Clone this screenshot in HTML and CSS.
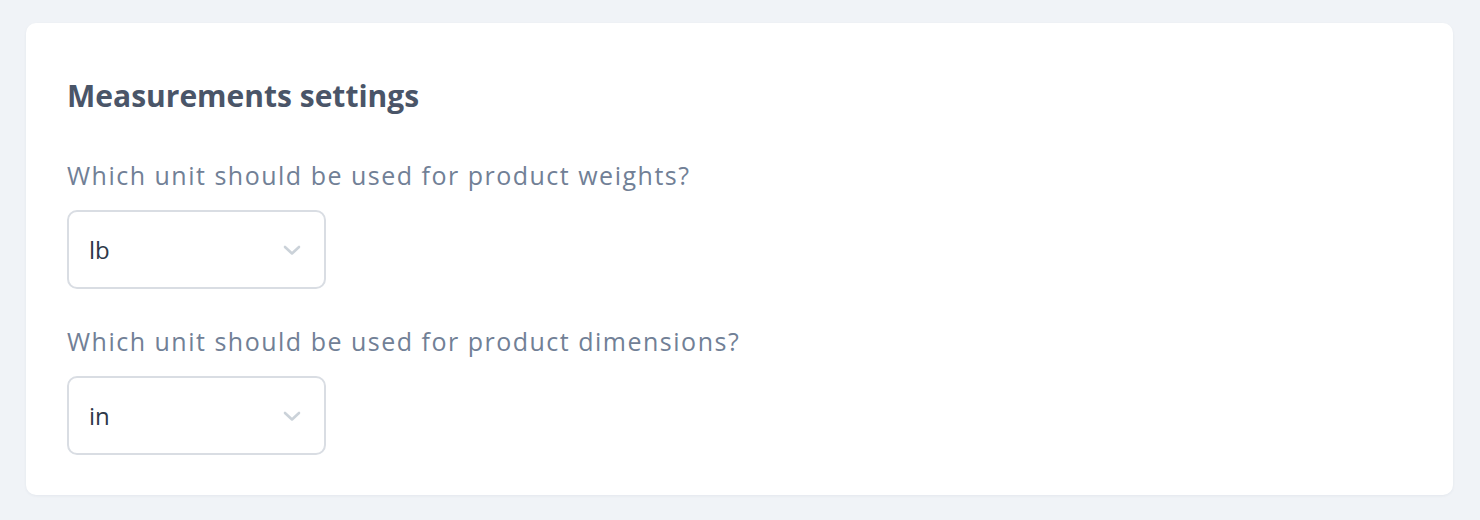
FILE: index.html
```html
<!DOCTYPE html>
<html lang="en">
<head>
  <meta charset="UTF-8" />
  <meta name="viewport" content="width=device-width, initial-scale=1.0" />
  <title>Measurements settings</title>
  <link rel="stylesheet" href="styles.css">
</head>
<body>

  <!-- settings card -->
  <section class="card">
    <h2 class="card-title">Measurements settings</h2>

    <div class="field">
      <label class="field-label" for="weightUnit">Which unit should be used for product weights?</label>
      <div class="select">
        <span class="select-value" id="weightUnit">lb</span>
        <svg class="select-arrow" width="20" height="12" viewBox="0 0 20 12">
          <path d="M3 3 L10 9.5 L17 3" fill="none" stroke="#cbd2d9" stroke-width="2.6" stroke-linecap="round" stroke-linejoin="round" />
        </svg>
      </div>
    </div>

    <div class="field">
      <label class="field-label" for="dimensionUnit">Which unit should be used for product dimensions?</label>
      <div class="select">
        <span class="select-value" id="dimensionUnit">in</span>
        <svg class="select-arrow" width="20" height="12" viewBox="0 0 20 12">
          <path d="M3 3 L10 9.5 L17 3" fill="none" stroke="#cbd2d9" stroke-width="2.6" stroke-linecap="round" stroke-linejoin="round" />
        </svg>
      </div>
    </div>
  </section>

</body>
</html>
```

FILE: styles.css
```css
body {
  margin: 0;
  padding: 23px 27px 27px 26px;
  font-family: 'Open Sans', 'Noto Sans', sans-serif;
  background-color: #f0f3f7;
  color: #4a5568;
}
.card {
  background-color: #fff;
  border-radius: 10px;
  padding: 55px 41px 40px;
  box-shadow: 0 1px 3px rgba(30, 50, 80, 0.06);
}
.card-title {
  margin: 0 0 45px;
  font-size: 30px;
  line-height: 36px;
  font-weight: 700;
  color: #4a5568;
}
.field + .field {
  margin-top: 36px;
}
.field-label {
  display: block;
  font-size: 25px;
  line-height: 32px;
  letter-spacing: 1.5px;
  color: #718096;
  margin-bottom: 19px;
}
.select {
  display: flex;
  align-items: center;
  justify-content: space-between;
  box-sizing: border-box;
  width: 259px;
  height: 79px;
  padding: 0 22px 0 20px;
  border: 2px solid #d9dde3;
  border-radius: 10px;
}
.select-value {
  font-size: 24px;
  color: #2d3748;
}
```
